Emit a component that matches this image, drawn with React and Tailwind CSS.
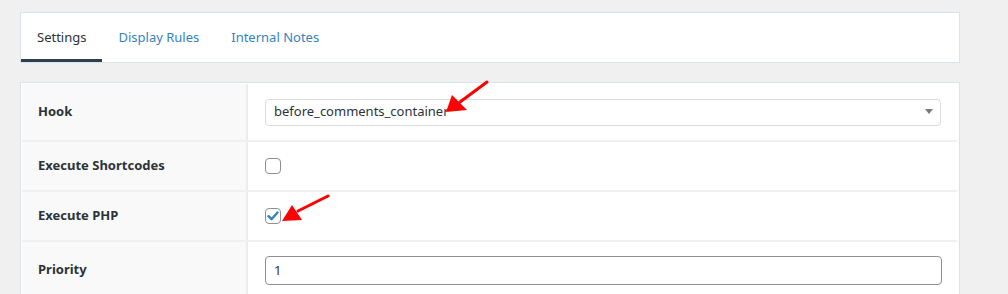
import React from "react";

const rows = [
  { label: "Hook", kind: "select", h: "h-[58px]" },
  { label: "Execute Shortcodes", kind: "checkbox", h: "h-[50px]" },
  { label: "Execute PHP", kind: "checked", h: "h-[50px]" },
  { label: "Priority", kind: "input", h: "h-[56px]" },
];

const Field = ({ kind }) => {
  if (kind === "select") {
    return (
      <div className="flex items-center justify-between w-[676px] h-[27px] border border-[#dcdcde] rounded-[4px] pl-[8px] pr-[6px] bg-white">
        <span>before_comments_container</span>
        <svg width="10" height="6" viewBox="0 0 10 6">
          <path d="M1 0h8L5 5z" fill="#7a7a7a" />
        </svg>
      </div>
    );
  }
  if (kind === "checkbox" || kind === "checked") {
    return (
      <div className="w-[16px] h-[16px] border border-[#8c8f94] rounded-[4px] bg-white flex items-center justify-center">
        {kind === "checked" && (
          <svg width="12" height="12" viewBox="0 0 12 12">
            <path d="M1.5 6.2l3 3L10.5 2.5" stroke="#3582c4" strokeWidth="2.4" fill="none" strokeLinecap="round" strokeLinejoin="round" />
          </svg>
        )}
      </div>
    );
  }
  return (
    <div className="flex items-center w-[677px] h-[29px] border border-[#8c8f94] rounded-[4px] px-[8px] bg-white mt-[1px] text-[#2c3338]">
      1
    </div>
  );
};

export default function App() {
  return (
    <div className="relative min-h-[294px] h-[294px] overflow-hidden bg-[#f0f0f1] pt-[12px] pl-[20px] text-[13px] text-[#2c3338] font-['Noto_Sans',sans-serif]">
      {/* Tabs */}
      <div className="w-[940px] h-[51px] bg-white border border-[#dce3e8] flex">
        <div className="px-4 flex items-center border-b-[3px] border-[#2c3e50] pt-[4px] text-[#2c3338]">Settings</div>
        <div className="px-4 flex items-center pt-[1px] text-[#3582c4]">Display Rules</div>
        <div className="px-4 flex items-center pt-[1px] text-[#3582c4]">Internal Notes</div>
      </div>

      {/* Settings table */}
      <div className="mt-[19px] w-[940px] bg-white border border-[#dce3e8] p-[1px] pr-[2px]">
        {rows.map((r, i) => (
          <div key={r.label} className={`flex ${r.h} ${i < rows.length - 1 ? "border-b-2 border-[#f0f0f1]" : ""}`}>
            <div className="w-[226px] bg-[#f9f9f9] flex items-center pl-[16px] font-bold text-[#2c3338] border-r-[2px] border-[#ececec]">
              {r.label}
            </div>
            <div className="flex-1 flex items-center pl-[17px]">
              <Field kind={r.kind} />
            </div>
          </div>
        ))}
      </div>

      {/* annotation arrows */}
      <svg className="absolute left-0 top-0 pointer-events-none" width="1008" height="294">
        <line x1="487" y1="82" x2="460" y2="102" stroke="#f00" strokeWidth="3" strokeLinecap="round" />
        <polygon points="446,112 452,95 467,110" fill="#f00" />
        <line x1="328" y1="196" x2="298" y2="211" stroke="#f00" strokeWidth="3" strokeLinecap="round" />
        <polygon points="282,221 292,205 302,220" fill="#f00" />
      </svg>
    </div>
  );
}
